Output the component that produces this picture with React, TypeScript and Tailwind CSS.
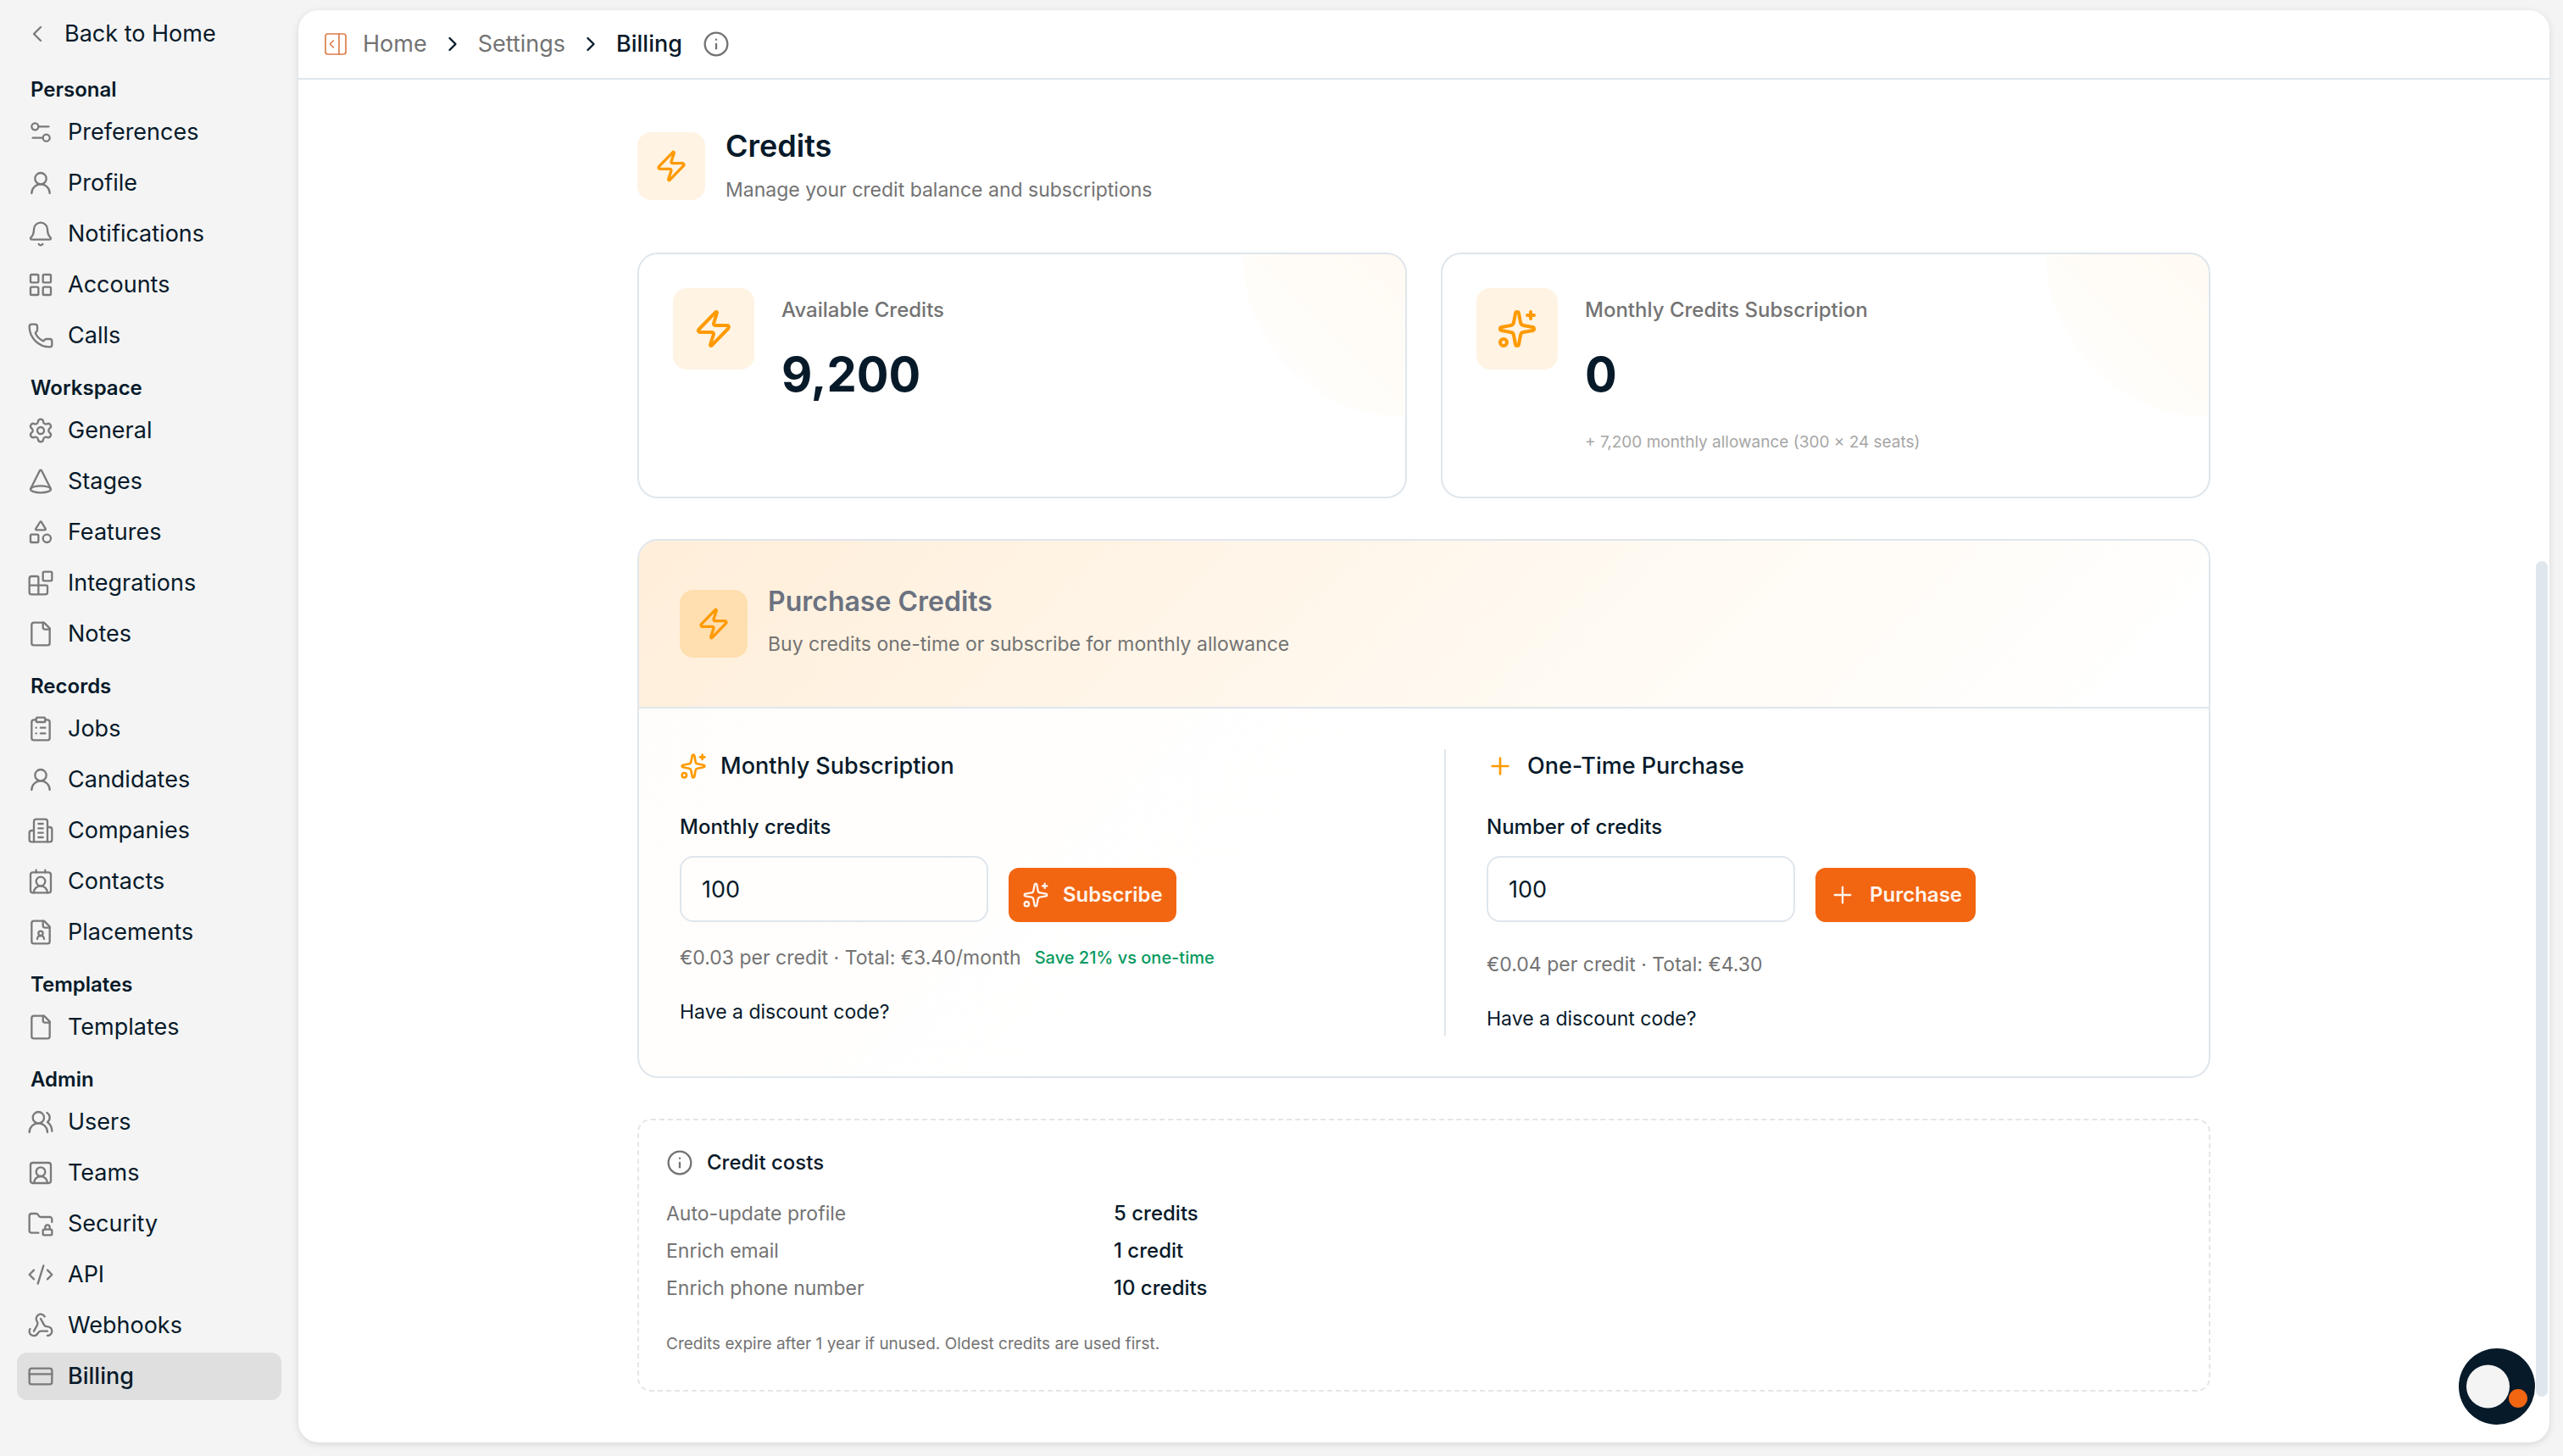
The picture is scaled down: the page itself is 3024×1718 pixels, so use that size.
import { useState } from "react"
import type { ComponentType, ReactNode } from "react"
import {
    Bell,
    Blocks,
    ChevronLeft,
    ChevronRight,
    ClipboardList,
    CodeXml,
    Cone,
    ContactRound,
    CreditCard,
    FolderLock,
    Info,
    LayoutGrid,
    PanelRightOpen,
    Phone,
    Plus,
    Settings,
    Settings2,
    Shapes,
    Sparkles,
    SquareUserRound,
    UserRound,
    UsersRound,
    Webhook,
    Zap,
} from "lucide-react"

type IconType = ComponentType<{ className?: string; strokeWidth?: number }>

interface NavItem {
    label: string
    icon: IconType
    active?: boolean
}

interface NavGroup {
    title: string
    items: NavItem[]
}

interface IconProps {
    className?: string
    strokeWidth?: number
    children?: ReactNode
}

const BaseIcon = ({ className, strokeWidth = 2, children }: IconProps) => (
    <svg
        viewBox="0 0 24 24"
        fill="none"
        stroke="currentColor"
        strokeWidth={strokeWidth}
        strokeLinecap="round"
        strokeLinejoin="round"
        className={className}
        aria-hidden="true"
    >
        {children}
    </svg>
)

const FileIcon = (props: IconProps) => (
    <BaseIcon {...props}>
        <path d="M15 2H6a2 2 0 0 0-2 2v16a2 2 0 0 0 2 2h12a2 2 0 0 0 2-2V7Z" />
        <path d="M14 2v4a2 2 0 0 0 2 2h4" />
    </BaseIcon>
)

const FileUserIcon = (props: IconProps) => (
    <BaseIcon {...props}>
        <path d="M15 2H6a2 2 0 0 0-2 2v16a2 2 0 0 0 2 2h12a2 2 0 0 0 2-2V7Z" />
        <path d="M14 2v4a2 2 0 0 0 2 2h4" />
        <path d="M15 18a3 3 0 1 0-6 0" />
        <circle cx="12" cy="13" r="2" />
    </BaseIcon>
)

const BuildingIcon = (props: IconProps) => (
    <BaseIcon {...props}>
        <path d="M6 22V4a2 2 0 0 1 2-2h8a2 2 0 0 1 2 2v18Z" />
        <path d="M6 12H4a2 2 0 0 0-2 2v6a2 2 0 0 0 2 2h2" />
        <path d="M18 9h2a2 2 0 0 1 2 2v9a2 2 0 0 1-2 2h-2" />
        <path d="M10 6h4" />
        <path d="M10 10h4" />
        <path d="M10 14h4" />
        <path d="M10 18h4" />
    </BaseIcon>
)

const navGroups: NavGroup[] = [
    {
        title: "Personal",
        items: [
            { label: "Preferences", icon: Settings2 },
            { label: "Profile", icon: UserRound },
            { label: "Notifications", icon: Bell },
            { label: "Accounts", icon: LayoutGrid },
            { label: "Calls", icon: Phone },
        ],
    },
    {
        title: "Workspace",
        items: [
            { label: "General", icon: Settings },
            { label: "Stages", icon: Cone },
            { label: "Features", icon: Shapes },
            { label: "Integrations", icon: Blocks },
            { label: "Notes", icon: FileIcon },
        ],
    },
    {
        title: "Records",
        items: [
            { label: "Jobs", icon: ClipboardList },
            { label: "Candidates", icon: UserRound },
            { label: "Companies", icon: BuildingIcon },
            { label: "Contacts", icon: ContactRound },
            { label: "Placements", icon: FileUserIcon },
        ],
    },
    {
        title: "Templates",
        items: [{ label: "Templates", icon: FileIcon }],
    },
    {
        title: "Admin",
        items: [
            { label: "Users", icon: UsersRound },
            { label: "Teams", icon: SquareUserRound },
            { label: "Security", icon: FolderLock },
            { label: "API", icon: CodeXml },
            { label: "Webhooks", icon: Webhook },
            { label: "Billing", icon: CreditCard, active: true },
        ],
    },
]

const creditCosts = [
    { action: "Auto-update profile", cost: "5 credits" },
    { action: "Enrich email", cost: "1 credit" },
    { action: "Enrich phone number", cost: "10 credits" },
]

const Sidebar = () => (
    <aside className="w-[352px] shrink-0 px-5 pt-3">
        <a href="#home" className="mb-1 flex h-14 items-center gap-4 px-2 text-[27px]">
            <ChevronLeft className="size-8 text-[#7a7a7a]" strokeWidth={1.75} />
            Back to Home
        </a>
        <nav>
            {navGroups.map((group) => (
                <div key={group.title}>
                    <h2 className="flex h-14 items-center px-4 pt-3 text-[24px] font-semibold">{group.title}</h2>
                    <ul className="flex flex-col gap-1">
                        {group.items.map(({ label, icon: Icon, active }) => (
                            <li key={label}>
                                <a
                                    href={`#${label.toLowerCase()}`}
                                    aria-current={active ? "page" : undefined}
                                    className={`flex h-14 items-center gap-4 rounded-xl px-3 text-[27px] ${
                                        active ? "bg-[#dfdfdf] font-medium" : ""
                                    }`}
                                >
                                    <Icon className="size-8 shrink-0 text-[#7a7a7a]" strokeWidth={1.75} />
                                    {label}
                                </a>
                            </li>
                        ))}
                    </ul>
                </div>
            ))}
        </nav>
    </aside>
)

const Header = () => (
    <header className="flex h-[82px] shrink-0 items-center border-b-2 border-[#dfe6ec] px-7 text-[27px]">
        <button type="button" aria-label="Toggle sidebar" className="mr-4 text-[#dd7c4c]">
            <PanelRightOpen className="size-8" strokeWidth={1.25} />
        </button>
        <nav aria-label="Breadcrumb" className="flex items-center gap-4">
            <a href="#home" className="text-[#737373]">Home</a>
            <ChevronRight className="size-7" strokeWidth={2} />
            <a href="#settings" className="text-[#737373]">Settings</a>
            <ChevronRight className="size-7" strokeWidth={2} />
            <span className="font-medium">Billing</span>
        </nav>
        <button type="button" aria-label="About billing" className="ml-6 text-[#737373]">
            <Info className="size-8" strokeWidth={1.75} />
        </button>
    </header>
)

interface StatCardProps {
    label: string
    value: string
    icon: IconType
    note?: string
}

const StatCard = ({ label, value, icon: Icon, note }: StatCardProps) => (
    <div className="relative flex gap-8 overflow-hidden rounded-3xl border-2 border-[#dfe6ec] p-10">
        <div className="absolute top-0 right-0 size-96 translate-x-1/2 -translate-y-1/2 rounded-full bg-linear-to-bl from-[#ff9a00]/10 to-[#ff9a00]/0" />
        <div className="flex size-24 shrink-0 items-center justify-center rounded-2xl bg-[#fff3e3] text-[#ff9a00]">
            <Icon className="size-12" strokeWidth={2} />
        </div>
        <div className="pt-1.5 pb-2">
            <p className="text-[24px] leading-10 font-medium text-[#737373]">{label}</p>
            <p className="mt-4 text-[56px] leading-20 font-bold">{value}</p>
            {note && <p className="mt-6 text-[19px] leading-8 text-[#a6a6a6]">{note}</p>}
        </div>
    </div>
)

interface CreditFormProps {
    id: string
    title: string
    label: string
    action: string
    icon: IconType
    children: ReactNode
}

const CreditForm = ({ id, title, label, action, icon: Icon, children }: CreditFormProps) => {
    const [amount, setAmount] = useState("100")

    return (
        <form onSubmit={(e) => e.preventDefault()}>
            <h3 className="flex items-center gap-4 text-[27px] leading-10 font-medium">
                <Icon className="size-8 text-[#ff9a00]" strokeWidth={2} />
                {title}
            </h3>
            <div className="mt-8 flex items-end gap-6">
                <div>
                    <label htmlFor={id} className="block text-[24px] leading-10 font-medium">{label}</label>
                    <input
                        id={id}
                        type="text"
                        inputMode="numeric"
                        value={amount}
                        onChange={(e) => setAmount(e.target.value)}
                        className="mt-3.5 block h-[78px] w-[364px] rounded-2xl border-2 border-[#dfe6ec] px-6 text-[27px] outline-none"
                    />
                </div>
                <button
                    type="submit"
                    className="flex h-16 items-center gap-4 rounded-xl bg-[#f26511] px-4 text-[24px] font-semibold text-[#fff4ec]"
                >
                    <Icon className="size-8" strokeWidth={1.75} />
                    {action}
                </button>
            </div>
            {children}
            <button type="button" className="mt-6 block text-[23px] leading-10">Have a discount code?</button>
        </form>
    )
}

const PurchaseCard = () => (
    <section className="mt-12 overflow-hidden rounded-3xl border-2 border-[#dfe6ec] bg-linear-135 from-[#ff9a00]/2 to-[#ff9a00]/0 to-50%">
        <div className="flex items-center gap-6 border-b-2 border-[#dfe6ec] bg-linear-135 from-[#ffeed9] via-[#fff8ee] via-50% to-white to-95% p-12">
            <div className="flex size-20 shrink-0 items-center justify-center rounded-2xl bg-[#ffdfb0] text-[#ff9a00]">
                <Zap className="size-10" strokeWidth={2} />
            </div>
            <div className="pb-1.5">
                <h2 className="text-[32px] leading-12 font-semibold text-[#6b7280]">Purchase Credits</h2>
                <p className="mt-1.5 text-[23px] leading-10 text-[#737373]">
                    Buy credits one-time or subscribe for monthly allowance
                </p>
            </div>
        </div>
        <div className="grid grid-cols-2 gap-12 p-12">
            <CreditForm
                id="monthly-credits"
                title="Monthly Subscription"
                label="Monthly credits"
                action="Subscribe"
                icon={Sparkles}
            >
                <p className="mt-[22px] flex items-center gap-4 text-[23px] leading-10 text-[#737373]">
                    €0.03 per credit · Total: €3.40/month
                    <span className="text-[20px] font-medium text-[#079a60]">Save 21% vs one-time</span>
                </p>
            </CreditForm>
            <div className="border-l-2 border-[#dfe6ec] pl-12">
                <CreditForm
                    id="one-time-credits"
                    title="One-Time Purchase"
                    label="Number of credits"
                    action="Purchase"
                    icon={Plus}
                >
                    <p className="mt-[30px] text-[23px] leading-10 text-[#737373]">
                        €0.04 per credit · Total: €4.30
                    </p>
                </CreditForm>
            </div>
        </div>
    </section>
)

const CreditCosts = () => (
    <section className="mt-12 rounded-2xl border-2 border-dashed border-[#e3e6e8] px-8 pt-8 pb-9">
        <h2 className="flex items-center gap-4 text-[24px] leading-9 font-medium">
            <Info className="size-8 text-[#737373]" strokeWidth={1.75} />
            Credit costs
        </h2>
        <table className="mt-5 text-left text-[24px] leading-11">
            <tbody>
                {creditCosts.map((row) => (
                    <tr key={row.action}>
                        <th scope="row" className="w-[528px] text-[23px] font-normal text-[#737373]">{row.action}</th>
                        <td className="font-medium">{row.cost}</td>
                    </tr>
                ))}
            </tbody>
        </table>
        <p className="mt-6.5 text-[19px] leading-9 text-[#737373]">
            Credits expire after 1 year if unused. Oldest credits are used first.
        </p>
    </section>
)

export default function App() {
    return (
        <div className="flex min-h-screen bg-[#f4f4f4] font-['Inter',sans-serif] text-[#071a2a]">
            <Sidebar />
            <main className="relative mt-3 mr-4 mb-4 flex-1 rounded-3xl bg-white shadow-[0_2px_8px_rgba(0,0,0,0.12)]">
                <Header />
                <div className="mx-auto max-w-[1856px] pt-12 pb-[60px]">
                    <div className="flex items-center gap-6">
                        <div className="flex size-20 shrink-0 items-center justify-center rounded-2xl bg-[#fff3e3] text-[#ff9a00]">
                            <Zap className="size-10" strokeWidth={2} />
                        </div>
                        <div className="pt-0.5 pb-1.5">
                            <h1 className="text-[36px] leading-14 font-semibold">Credits</h1>
                            <p className="mt-1 text-[23px] leading-10 text-[#737373]">
                                Manage your credit balance and subscriptions
                            </p>
                        </div>
                    </div>
                    <div className="mt-12 grid grid-cols-2 gap-10">
                        <StatCard label="Available Credits" value="9,200" icon={Zap} />
                        <StatCard
                            label="Monthly Credits Subscription"
                            value="0"
                            icon={Sparkles}
                            note="+ 7,200 monthly allowance (300 × 24 seats)"
                        />
                    </div>
                    <PurchaseCard />
                    <CreditCosts />
                </div>
                {/* scroll thumb */}
                <div className="absolute top-[650px] right-0.5 bottom-[54px] w-3.5 rounded-lg bg-[#dfe7ec]" />
                <button
                    type="button"
                    aria-label="Open assistant"
                    className="absolute right-[17px] bottom-[21px] size-[90px] rounded-full bg-[#071a2a]"
                >
                    <svg viewBox="0 0 90 90" className="size-full">
                        <circle cx="34.5" cy="45" r="25.5" fill="#f4f4f4" />
                        <circle cx="70" cy="59" r="11" fill="#f26511" />
                    </svg>
                </button>
            </main>
        </div>
    )
}
